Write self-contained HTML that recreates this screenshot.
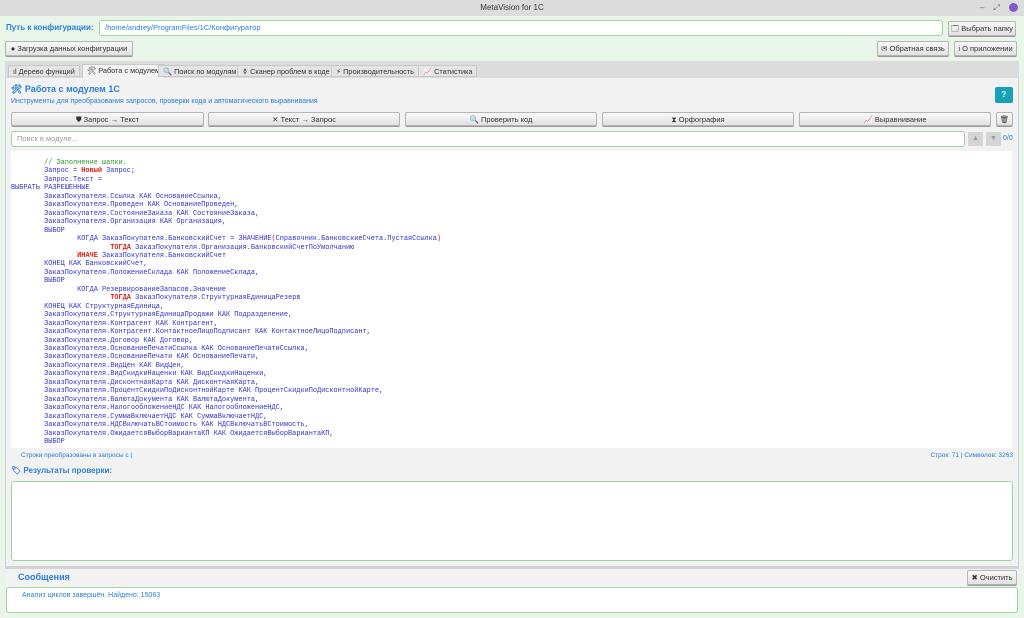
<!DOCTYPE html>
<html><head><meta charset="utf-8"><style>
*{box-sizing:border-box;margin:0;padding:0}
body{width:1024px;height:618px;overflow:hidden;background:#e9f5e9;font-family:"Liberation Sans","DejaVu Sans",sans-serif;font-size:8px;color:#333;position:relative}
.abs{position:absolute}
.title{left:0;top:0;width:1024px;height:16px;background:#dcdcdc;text-align:center;font-size:8px;line-height:16px;color:#333}
.btn{position:absolute;background:linear-gradient(#f8f8f8,#e2e2e2);border:1px solid #b5b5b5;border-radius:2px;font-size:7.5px;line-height:14px;text-align:center;color:#333;box-shadow:0 1px 0 #999}
.inp{position:absolute;background:#fff;border:1px solid #9fd69f;border-radius:3px;font-size:7.5px;padding-left:5px}
.tab{position:absolute;top:65px;height:12px;background:#e4e4e4;border:1px solid #c8c8c8;font-size:7.3px;line-height:11px;padding:0 4px;color:#333}
pre{font-family:"Liberation Mono","DejaVu Sans Mono",monospace;font-size:6.9px;line-height:8.45px;color:#3333cc}
.g{color:#2a9a2a}.r{color:#e0201b;font-weight:bold}
</style></head><body>
<div class="abs title">MetaVision for 1C</div>
<div class="abs" style="left:980px;top:3px;color:#666;font-size:8px">–&nbsp;&nbsp;&nbsp;&nbsp;⤢</div>
<div class="abs" style="left:1009px;top:3px;width:9px;height:9px;border-radius:50%;background:#7b5cc8"></div>

<div class="abs" style="left:6px;top:23px;font-weight:bold;color:#2a7fd6;font-size:8px">Путь к конфигурации:</div>
<div class="inp" style="left:99px;top:20px;width:844px;height:16px;line-height:14px;color:#2a7fd6">/home/andrey/ProgramFiles/1C/Конфигуратор</div>
<div class="btn" style="left:948px;top:21px;width:68px;height:15px">🗔 Выбрать папку</div>
<div class="btn" style="left:5px;top:41px;width:128px;height:15px">● Загрузка данных конфигурации</div>
<div class="btn" style="left:877px;top:41px;width:72px;height:15px">✉ Обратная связь</div>
<div class="btn" style="left:954px;top:41px;width:63px;height:15px">i О приложении</div>

<div class="abs" style="left:5px;top:61px;width:1014px;height:506px;background:#f2f2f2;border:1px solid #d0d0d0"></div>
<div class="abs" style="left:5px;top:61px;width:1014px;height:17px;background:#dcdcdc"></div>
<div class="tab" style="left:8px">ıl Дерево функций</div>
<div class="tab" style="left:82px;background:#f2f2f2;top:64px;height:14px;border-bottom:none">🛠 Работа с модулем</div>
<div class="tab" style="left:158px">🔍 Поиск по модулям</div>
<div class="tab" style="left:237px">⚱ Сканер проблем в коде</div>
<div class="tab" style="left:331px">⚡ Производительность</div>
<div class="tab" style="left:418px">📈 Статистика</div>

<div class="abs" style="left:11px;top:84px;font-weight:bold;color:#2a7fd6;font-size:9px">🛠 Работа с модулем 1С</div>
<div class="abs" style="left:11px;top:98px;color:#2a7fd6;font-size:7px">Инструменты для преобразования запросов, проверки кода и автоматического выравнивания</div>
<div class="abs" style="left:995px;top:87px;width:18px;height:16px;background:#17a2b8;border-radius:2px;color:#fff;font-weight:bold;text-align:center;line-height:16px;font-size:8px">?</div>

<div class="btn" style="left:11px;top:112px;width:193px;height:14px">⛊ Запрос → Текст</div>
<div class="btn" style="left:208px;top:112px;width:192px;height:14px">✕ Текст → Запрос</div>
<div class="btn" style="left:405px;top:112px;width:192px;height:14px">🔍 Проверить код</div>
<div class="btn" style="left:602px;top:112px;width:192px;height:14px">⧗ Орфография</div>
<div class="btn" style="left:799px;top:112px;width:192px;height:14px">📈 Выравнивание</div>
<div class="btn" style="left:996px;top:112px;width:17px;height:14px">🗑</div>

<div class="inp" style="left:11px;top:131px;width:954px;height:16px;line-height:14px;color:#999">Поиск в модуле...</div>
<div class="abs" style="left:968px;top:132px;width:15px;height:14px;background:#d5d5d5;color:#999;text-align:center;line-height:14px;font-size:7px">▲</div>
<div class="abs" style="left:986px;top:132px;width:15px;height:14px;background:#d5d5d5;color:#999;text-align:center;line-height:14px;font-size:7px">▼</div>
<div class="abs" style="left:1003px;top:135px;color:#2a7fd6;font-size:7px">0/0</div>

<div class="abs" style="left:11px;top:151px;width:1001px;height:297px;background:#fff;overflow:hidden">
<pre style="position:absolute;left:0;top:8px">        <span class="g">// Заполнение шапки.</span>
        Запрос = <span class="r">Новый</span> Запрос;
        Запрос.Текст =
ВЫБРАТЬ РАЗРЕШЕННЫЕ
        ЗаказПокупателя.Ссылка КАК ОснованиеСсылка,
        ЗаказПокупателя.Проведен КАК ОснованиеПроведен,
        ЗаказПокупателя.СостояниеЗаказа КАК СостояниеЗаказа,
        ЗаказПокупателя.Организация КАК Организация,
        ВЫБОР
                КОГДА ЗаказПокупателя.БанковскийСчет = ЗНАЧЕНИЕ<span style="color:#e0201b">(</span>Справочник.БанковскиеСчета.ПустаяСсылка<span style="color:#e0201b">)</span>
                        <span class="r">ТОГДА</span> ЗаказПокупателя.Организация.БанковскийСчетПоУмолчанию
                <span class="r">ИНАЧЕ</span> ЗаказПокупателя.БанковскийСчет
        КОНЕЦ КАК БанковскийСчет,
        ЗаказПокупателя.ПоложениеСклада КАК ПоложениеСклада,
        ВЫБОР
                КОГДА РезервированиеЗапасов.Значение
                        <span class="r">ТОГДА</span> ЗаказПокупателя.СтруктурнаяЕдиницаРезерв
        КОНЕЦ КАК СтруктурнаяЕдиница,
        ЗаказПокупателя.СтруктурнаяЕдиницаПродажи КАК Подразделение,
        ЗаказПокупателя.Контрагент КАК Контрагент,
        ЗаказПокупателя.Контрагент.КонтактноеЛицоПодписант КАК КонтактноеЛицоПодписант,
        ЗаказПокупателя.Договор КАК Договор,
        ЗаказПокупателя.ОснованиеПечатиСсылка КАК ОснованиеПечатиСсылка,
        ЗаказПокупателя.ОснованиеПечати КАК ОснованиеПечати,
        ЗаказПокупателя.ВидЦен КАК ВидЦен,
        ЗаказПокупателя.ВидСкидкиНаценки КАК ВидСкидкиНаценки,
        ЗаказПокупателя.ДисконтнаяКарта КАК ДисконтнаяКарта,
        ЗаказПокупателя.ПроцентСкидкиПоДисконтнойКарте КАК ПроцентСкидкиПоДисконтнойКарте,
        ЗаказПокупателя.ВалютаДокумента КАК ВалютаДокумента,
        ЗаказПокупателя.НалогообложениеНДС КАК НалогообложениеНДС,
        ЗаказПокупателя.СуммаВключаетНДС КАК СуммаВключаетНДС,
        ЗаказПокупателя.НДСВключатьВСтоимость КАК НДСВключатьВСтоимость,
        ЗаказПокупателя.ОжидаетсяВыборВариантаКП КАК ОжидаетсяВыборВариантаКП,
        ВЫБОР</pre></div>

<div class="abs" style="left:21px;top:452px;color:#2a7fd6;font-size:6.5px">Строки преобразованы в запросы с |</div>
<div class="abs" style="right:11px;top:452px;color:#2a7fd6;font-size:6.5px">Строк: 71 | Символов: 3263</div>
<div class="abs" style="left:11px;top:466px;color:#2a7fd6;font-weight:bold;font-size:8px">🏷 Результаты проверки:</div>
<div class="inp" style="left:11px;top:481px;width:1002px;height:80px"></div>

<div class="abs" style="left:5px;top:567px;width:1014px;height:20px;background:#f2f2f2;border-top:2px solid #d5d5d5"></div>
<div class="abs" style="left:18px;top:572px;color:#2a7fd6;font-weight:bold;font-size:9px">Сообщения</div>
<div class="btn" style="left:967px;top:570px;width:50px;height:15px">✖ Очистить</div>
<div class="inp" style="left:6px;top:587px;width:1012px;height:26px;padding:4px 0 0 15px;color:#2a7fd6;font-size:7px">Анализ циклов завершён. Найдено: 15063</div>
</body></html>
